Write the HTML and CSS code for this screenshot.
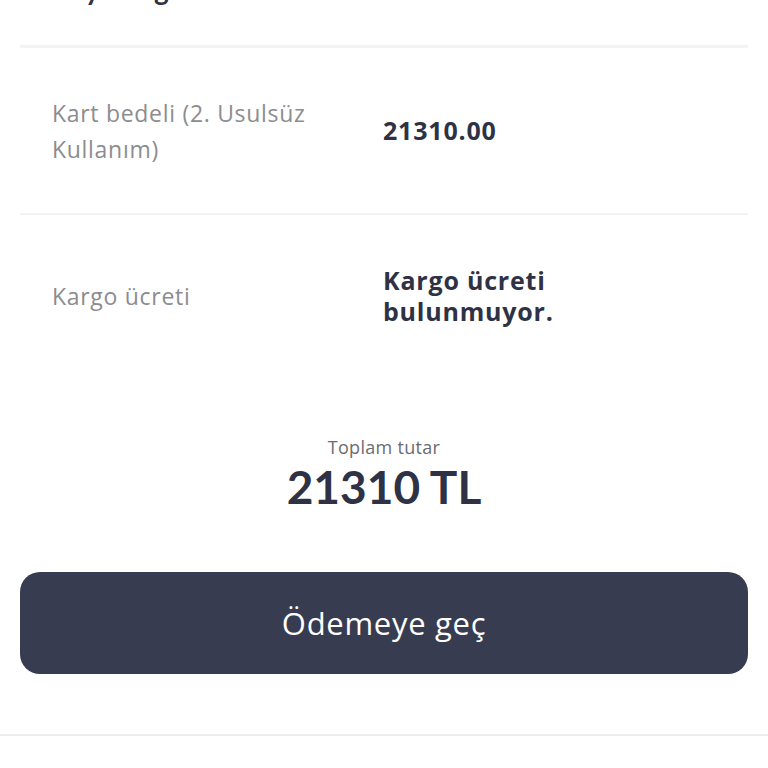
FILE: index.html
```html
<!DOCTYPE html>
<html lang="tr">
<head>
    <meta charset="UTF-8">
    <meta name="viewport" content="width=device-width, initial-scale=1.0">
    <title>Ödeme</title>
    <link rel="stylesheet" href="styles.css">
</head>
<body>
    <div class="container">
        <h2 class="title">Kayıt bilgileri</h2>

        <div class="row row-first">
            <div class="label">Kart bedeli (2. Usulsüz Kullanım)</div>
            <div class="value">21310.00</div>
        </div>
        <div class="row row-second">
            <div class="label">Kargo ücreti</div>
            <div class="value">Kargo ücreti bulunmuyor.</div>
        </div>

        <div class="total">
            <div class="total-label">Toplam tutar</div>
            <div class="total-amount">21310 TL</div>
        </div>

        <button class="pay-button">Ödemeye geç</button>
    </div>
    <div class="bottom-bar"></div>
</body>
</html>
```

FILE: styles.css
```css
body {
    font-family: "Open Sans", Lato, sans-serif;
    margin: 0;
    background-color: #ffffff;
    color: #2f3245;
    overflow: hidden;
}

.container {
    padding: 0 20px;
}

.title {
    margin: -28px 0 39px 32px;
    font-family: Lato, sans-serif;
    font-size: 28px;
    line-height: 34px;
    font-weight: 700;
}

.row {
    display: grid;
    grid-template-columns: 331px 1fr;
    align-items: center;
    padding-left: 32px;
    border-top: 3px solid #f3f3f3;
}

.row-first {
    min-height: 165px;
}

.row-second {
    min-height: 162px;
    border-top-width: 2px;
}

.label {
    font-size: 23px;
    line-height: 36px;
    letter-spacing: 0.7px;
    color: #8c8c90;
    max-width: 290px;
}

.value {
    font-size: 25px;
    line-height: 31px;
    letter-spacing: 0.8px;
    font-weight: 700;
    max-width: 220px;
}

.total {
    margin-top: 58px;
    text-align: center;
}

.total-label {
    font-size: 18px;
    line-height: 24px;
    letter-spacing: 0.3px;
    color: #6b6b70;
}

.total-amount {
    font-family: Lato, sans-serif;
    font-size: 46px;
    line-height: 56px;
    font-weight: 700;
}

.pay-button {
    display: block;
    width: 100%;
    height: 102px;
    margin-top: 57px;
    border: none;
    border-radius: 20px;
    background-color: #383c50;
    color: #ffffff;
    font-family: inherit;
    font-size: 31px;
    font-weight: 500;
    letter-spacing: 0.7px;
    cursor: pointer;
}

.bottom-bar {
    margin-top: 60px;
    border-top: 2px solid #ececec;
    height: 40px;
}
```
